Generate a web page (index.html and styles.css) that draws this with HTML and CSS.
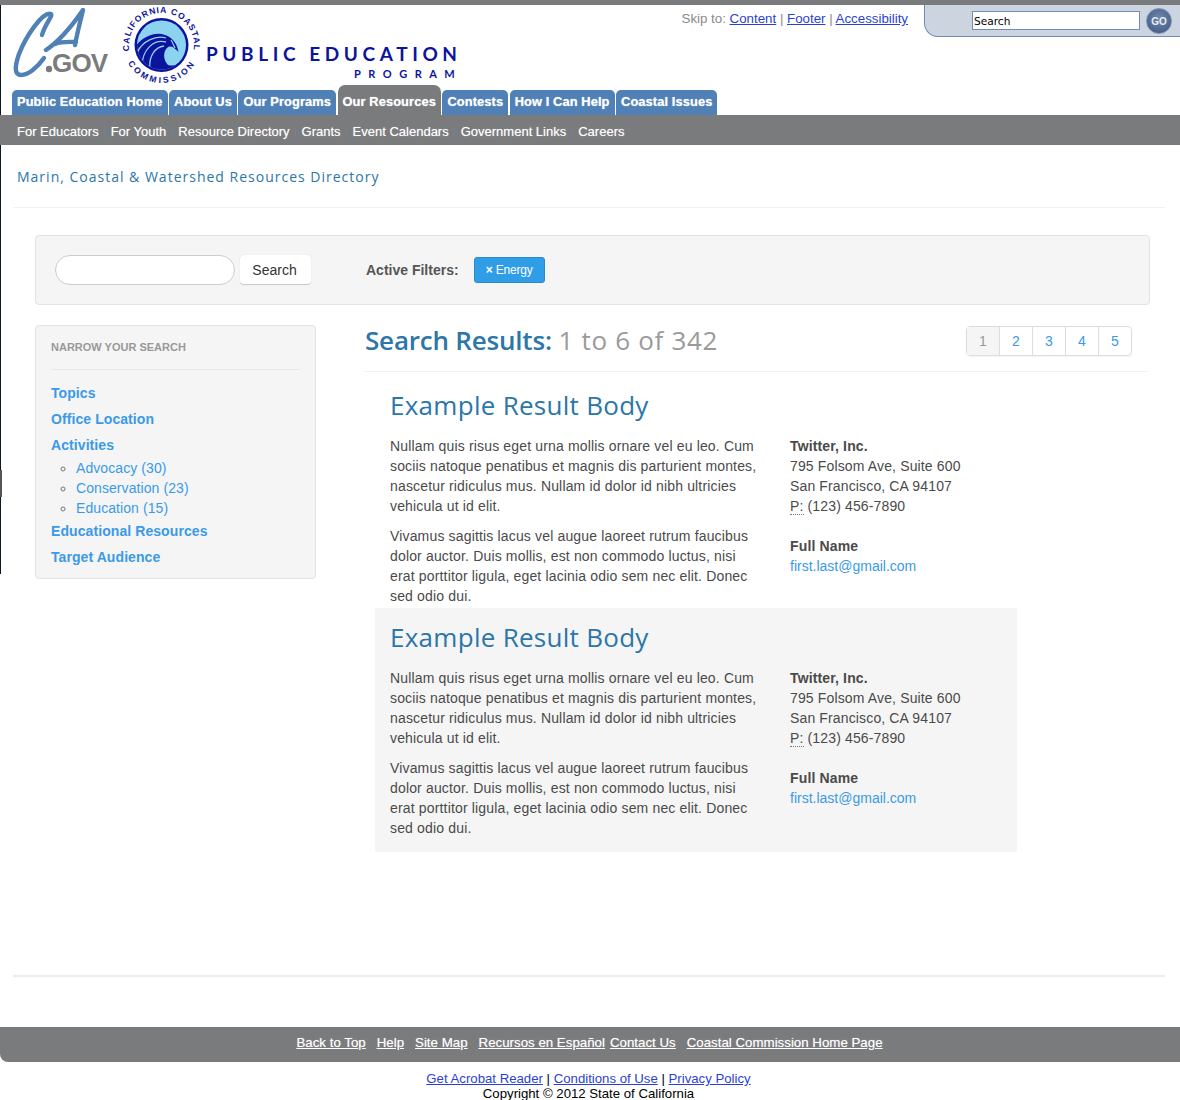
FILE: index.html
```html
<!DOCTYPE html>
<html lang="en">
<head>
<meta charset="utf-8">
<title>Marin, Coastal &amp; Watershed Resources Directory</title>
<link rel="stylesheet" href="styles.css">
</head>
<body>
<div class="page">
  <header class="head">
    <div class="logos">
      <svg class="ca-logo" width="96" height="70" viewBox="0 0 96 70">
        <path d="M29 27C32 16 40 8 38 6C30 3 13 28 6 46C1 60 2 67 8 67C15 67 24 60 31 50" fill="none" stroke="#4f80b6" stroke-width="4.4" stroke-linecap="round"/>
        <path d="M33 42C48 32 61 15 70 2C67 14 64 26 62 37M42 36C50 33 56 34 63 34" fill="none" stroke="#4f80b6" stroke-width="4.4" stroke-linecap="round" stroke-linejoin="round"/>
        <circle cx="36" cy="61" r="3.2" fill="#7a7b7d"/>
        <text x="39" y="64" class="gov">GOV</text>
      </svg>
      <svg class="seal" width="84" height="82" viewBox="0 0 84 82">
        <defs>
          <path id="sealtop" d="M9.5 46A32.5 32.5 0 1 1 73.5 46"/>
          <path id="sealbot" d="M8 58A38 38 0 0 0 75 58"/>
          <clipPath id="sealclip"><circle cx="41.5" cy="40" r="24.5"/></clipPath>
        </defs>
        <text class="seal-t"><textPath href="#sealtop" textLength="112">CALIFORNIA COASTAL</textPath></text>
        <text class="seal-t"><textPath href="#sealbot" textLength="80">COMMISSION</textPath></text>
        <circle cx="41.5" cy="40" r="27" fill="#0c149e"/>
        <circle cx="41.5" cy="40" r="24.5" fill="#8cd3ef"/>
        <g clip-path="url(#sealclip)">
          <path d="M14 44C20 33 34 26 45 30C52 32 57 38 58.5 47C54 42 50 40 47 43C43 47 43 55 48 60C55 62 62 58 68 52V70H14Z" fill="#0c149e"/>
          <path d="M17 48C22 36 36 30 46 33M22 62C22 44 34 34 46 37M30 66C28 50 36 42 44 41M51 35C53 38 54 41 55 43" fill="none" stroke="#8cd3ef" stroke-width="1.3"/>
        </g>
      </svg>
      <div class="program">
        <div class="prog-1">PUBLIC EDUCATION</div>
        <div class="prog-2">PROGRAM</div>
      </div>
    </div>
    <div class="skip">Skip to: <a href="#">Content</a> | <a href="#">Footer</a> | <a href="#">Accessibility</a></div>
    <form class="site-search">
      <input class="site-input" type="text" value="Search">
      <span class="go">GO</span>
    </form>
  </header>

  <nav class="tabs">
    <a class="tab" href="#">Public Education Home</a>
    <a class="tab" href="#">About Us</a>
    <a class="tab" href="#">Our Programs</a>
    <a class="tab active" href="#">Our Resources</a>
    <a class="tab" href="#">Contests</a>
    <a class="tab" href="#">How I Can Help</a>
    <a class="tab" href="#">Coastal Issues</a>
  </nav>
  <nav class="subnav">
    <a href="#">For Educators</a>
    <a href="#">For Youth</a>
    <a href="#">Resource Directory</a>
    <a href="#">Grants</a>
    <a href="#">Event Calendars</a>
    <a href="#">Government Links</a>
    <a href="#">Careers</a>
  </nav>

  <main class="content">
    <h1 class="page-title">Marin, Coastal &amp; Watershed Resources Directory</h1>

    <section class="filter-well">
      <input class="pill" type="text">
      <button class="search-btn" type="button">Search</button>
      <strong class="active-label">Active Filters:</strong>
      <a class="filter-tag" href="#"><span class="x">×</span> Energy</a>
    </section>

    <div class="columns">
      <aside class="sidebar">
        <h4 class="side-title">NARROW YOUR SEARCH</h4>
        <ul class="side-list">
          <li><a href="#">Topics</a></li>
          <li><a href="#">Office Location</a></li>
          <li><a href="#">Activities</a>
            <ul class="side-sub">
              <li><a href="#">Advocacy (30)</a></li>
              <li><a href="#">Conservation (23)</a></li>
              <li><a href="#">Education (15)</a></li>
            </ul>
          </li>
          <li><a href="#">Educational Resources</a></li>
          <li><a href="#">Target Audience</a></li>
        </ul>
      </aside>

      <div class="results">
        <div class="results-head">
          <h2 class="results-title">Search Results: <span>1 to 6 of 342</span></h2>
          <div class="pager">
            <span class="page-num current">1</span>
            <a class="page-num" href="#">2</a>
            <a class="page-num" href="#">3</a>
            <a class="page-num" href="#">4</a>
            <a class="page-num" href="#">5</a>
          </div>
        </div>

        <article class="result">
          <h3 class="result-title">Example Result Body</h3>
          <div class="result-body">
            <div class="result-text">
              <p>Nullam quis risus eget urna mollis ornare vel eu leo. Cum sociis natoque penatibus et magnis dis parturient montes, nascetur ridiculus mus. Nullam id dolor id nibh ultricies vehicula ut id elit.</p>
              <p>Vivamus sagittis lacus vel augue laoreet rutrum faucibus dolor auctor. Duis mollis, est non commodo luctus, nisi erat porttitor ligula, eget lacinia odio sem nec elit. Donec sed odio dui.</p>
            </div>
            <div class="result-contact">
              <address><strong>Twitter, Inc.</strong><br>795 Folsom Ave, Suite 600<br>San Francisco, CA 94107<br><abbr>P:</abbr> (123) 456-7890</address>
              <address><strong>Full Name</strong><br><a href="#">first.last@gmail.com</a></address>
            </div>
          </div>
        </article>

        <article class="result alt">
          <h3 class="result-title">Example Result Body</h3>
          <div class="result-body">
            <div class="result-text">
              <p>Nullam quis risus eget urna mollis ornare vel eu leo. Cum sociis natoque penatibus et magnis dis parturient montes, nascetur ridiculus mus. Nullam id dolor id nibh ultricies vehicula ut id elit.</p>
              <p>Vivamus sagittis lacus vel augue laoreet rutrum faucibus dolor auctor. Duis mollis, est non commodo luctus, nisi erat porttitor ligula, eget lacinia odio sem nec elit. Donec sed odio dui.</p>
            </div>
            <div class="result-contact">
              <address><strong>Twitter, Inc.</strong><br>795 Folsom Ave, Suite 600<br>San Francisco, CA 94107<br><abbr>P:</abbr> (123) 456-7890</address>
              <address><strong>Full Name</strong><br><a href="#">first.last@gmail.com</a></address>
            </div>
          </div>
        </article>
      </div>
    </div>
  </main>

  <hr class="foot-rule">
  <nav class="footer-bar">
    <a href="#">Back to Top</a>
    <a href="#">Help</a>
    <a href="#">Site Map</a>
    <a href="#">Recursos en Español</a>
    <a class="tight" href="#">Contact Us</a>
    <a href="#">Coastal Commission Home Page</a>
  </nav>
  <div class="legal">
    <div><a href="#">Get Acrobat Reader</a> | <a href="#">Conditions of Use</a> | <a href="#">Privacy Policy</a></div>
    <div>Copyright © 2012 State of California</div>
  </div>
</div>
</body>
</html>
```
FILE: styles.css
```css
* { box-sizing: border-box; }
html, body { margin: 0; padding: 0; background: #fff; }
body { font-family: "Liberation Sans", Arial, sans-serif; font-size: 14px; color: #333; height: 1100px; overflow: hidden; }
.page { position: relative; width: 1180px; height: 1100px; border-top: 5px solid #7a7b7d; }
.page::before { content: ""; position: absolute; left: 0; top: 0; width: 1px; height: 569px; background: #0a1826; }
.page::after { content: ""; position: absolute; left: 0; top: 465px; width: 2px; height: 27px; background: #555; }
a { color: #3a9ae8; text-decoration: none; }

.head { position: relative; height: 80px; }
.logos { display: flex; padding-left: 13px; }
.ca-logo { display: block; margin-top: 3px; flex: none; }
.gov { font: 700 26px "Liberation Sans", sans-serif; fill: #7a7b7d; letter-spacing: -.8px; }
.seal { display: block; margin-left: 11px; flex: none; overflow: visible; }
.seal-t { font: 700 8.6px "Liberation Sans", sans-serif; fill: #0c149e; }
.program { margin-left: 2px; padding-top: 38px; color: #0c149e; font-family: "Lato", sans-serif; width: 260px; }
.prog-1 { font-size: 19px; font-weight: 700; line-height: 22px; letter-spacing: 4.6px; white-space: nowrap; }
.prog-2 { font-size: 11px; line-height: 14px; margin-top: 2px; letter-spacing: 7.5px; text-align: left; padding-left: 148px; font-weight: 700; white-space: nowrap; }
.skip { position: absolute; right: 272px; top: 6px; font-size: 13.3px; color: #8b8b8b; line-height: 15px; white-space: nowrap; }
.skip a, .legal a { color: #2b3fd6; text-decoration: underline; }
.site-search { position: absolute; left: 924px; top: 0; right: 0; height: 32px; background: #ccd4e0; border: 1px solid #6d8db8; border-top: 0; border-right: 0; border-bottom-left-radius: 14px; display: flex; align-items: flex-start; padding: 3px 0 0 47px; }
.site-input { width: 168px; height: 19px; margin: 3px 0 0; padding: 0 1px; border: 1px solid #6d8db8; background: #fff; font: 10.6px "DejaVu Sans", sans-serif; color: #000; border-radius: 0; }
.go { display: flex; align-items: center; justify-content: center; width: 26px; height: 26px; margin-left: 6px; border-radius: 50%; background: radial-gradient(circle at 50% 40%, #7188ad, #3b5580); border: 1px solid #7c93b4; color: #e8edf4; font-weight: 700; font-size: 10px; }

.tabs { display: flex; align-items: flex-end; height: 30px; padding-left: 12px; gap: 1.5px; position: relative; }
.tab { display: block; height: 25px; padding: 0 5px; background: #4f80b6; color: #fff; font-weight: 700; font-size: 12.85px; letter-spacing: .1px; line-height: 23px; border-radius: 5px 5px 0 0; white-space: nowrap; text-shadow: 0 0 1px rgba(255,255,255,.7); }
.tab.active { height: 30px; padding-top: 5px; background: #7a7b7d; border-radius: 7px 7px 0 0; }
.subnav { position: relative; display: flex; height: 30px; background: #7a7b7d; padding-left: 17px; align-items: center; }
.subnav a { color: #fff; font-size: 13px; line-height: 14px; padding-right: 5px; margin: 3px 6px 0 0; border-right: 1px solid #6f8299; white-space: nowrap; text-shadow: 0 0 1px rgba(255,255,255,.5); }

.content { height: 830px; padding: 0 15px 0 13px; }
.page-title { margin: 0; height: 63px; padding: 23px 0 0 4px; border-bottom: 1px solid #f2f2f2; font: 400 14px/18px "Open Sans", sans-serif; color: #2c76a8; letter-spacing: 1px; }
.filter-well { display: flex; align-items: center; margin: 27px 0 0 22px; width: 1115px; height: 70px; padding: 0 0 0 19px; background: #f5f5f5; border: 1px solid #e3e3e3; border-radius: 4px; }
.pill { width: 180px; height: 30px; border: 1px solid #ccc; border-radius: 15px; background: #fff; margin: 0; }
.search-btn { width: 71px; height: 30px; margin-left: 5px; padding: 0 2px 0 0; border: 0; border-bottom: 1px solid #ccc; border-radius: 4px; background: #fff; font: 14px "Liberation Sans", sans-serif; color: #333; box-shadow: 0 0 1px #ccc; }
.active-label { margin-left: 55px; color: #555; font-size: 14px; }
.filter-tag { margin-left: 15px; display: block; width: 71px; height: 26px; background: #2f9ee6; border: 1px solid #2a8acb; border-radius: 3px; color: #fff; font-size: 12px; line-height: 24px; text-align: center; letter-spacing: -.2px; }
.x { font-weight: 700; }

.columns { display: flex; align-items: flex-start; margin-top: 20px; padding-left: 22px; }
.sidebar { flex: none; width: 281px; height: 254px; padding: 14px 15px 0; background: #f5f5f5; border: 1px solid #e3e3e3; border-radius: 4px; }
.side-title { margin: 0; height: 30px; border-bottom: 1px solid #e8e8e8; color: #999; font-size: 11px; line-height: 14px; font-weight: 700; }
.side-list, .side-sub { margin: 0; padding: 0; list-style: none; }
.side-list { margin-top: 13px; }
.side-list > li { font-weight: 700; font-size: 14px; letter-spacing: .08px; line-height: 20px; padding: 0 0 6px; }
.side-sub { margin: 3px 0 -3px; padding-left: 25px; list-style: circle; color: #777; font-weight: 400; font-size: 14px; }
.side-sub li { line-height: 20px; }

.results { flex: none; width: 782px; margin-left: 49px; }
.results-head { display: flex; align-items: flex-start; justify-content: space-between; height: 47px; border-bottom: 1px solid #f2f2f2; padding: 0 15px 0 0; }
.results-title { margin: 0; font: 600 26px/30px "Open Sans", sans-serif; letter-spacing: -.2px; color: #2c76a8; }
.results-title span { color: #9a9a9a; font-weight: 500; letter-spacing: .7px; }
.pager { display: flex; margin-top: 1px; border: 1px solid #ddd; border-radius: 4px; box-shadow: 0 1px 2px rgba(0,0,0,.05); }
.page-num { width: 33px; height: 28px; line-height: 28px; text-align: center; border-left: 1px solid #ddd; color: #3a9ae8; font-size: 14px; }
.page-num:first-child { border-left: 0; width: 32px; }
.page-num.current { background: #f5f5f5; color: #999; }

.result { width: 642px; margin-left: 10px; padding: 13px 15px 0; height: 236px; }
.result.alt { background: #f5f5f5; height: 244px; padding-top: 9px; }
.result-title { margin: 0; font: 500 26px/40px "Open Sans", sans-serif; letter-spacing: .28px; color: #2c76a8; }
.result-body { display: flex; gap: 30px; margin-top: 11px; }
.result-text { width: 370px; flex: none; }
.result-text p { margin: 0 0 10px; font-size: 14px; letter-spacing: .16px; line-height: 20px; color: #4a4a4a; }
.result-contact address { font-style: normal; font-size: 14px; letter-spacing: .14px; line-height: 20px; margin: 0 0 20px; color: #4a4a4a; white-space: nowrap; }
.result-contact a { letter-spacing: 0; }
abbr { border-bottom: 1px dotted #777; }

.foot-rule { margin: 0 15px 0 13px; height: 2px; border: 0; background: #eeeee8; }
.footer-bar { position: absolute; left: 0; right: 0; top: 1022px; height: 35px; padding: 0 1px 4px 0; background: #7a7b7d; border-bottom-left-radius: 8px; display: flex; justify-content: center; align-items: center; gap: 11px; }
.footer-bar a { color: #fff; text-decoration: underline; font-size: 13.3px; white-space: nowrap; text-shadow: 0 0 1px rgba(255,255,255,.5); }
.footer-bar .tight { margin-left: -6px; }
.legal { position: absolute; left: 0; right: 0; top: 1066px; text-align: center; font-size: 13.2px; line-height: 15px; color: #000; padding-right: 3px; }
```
